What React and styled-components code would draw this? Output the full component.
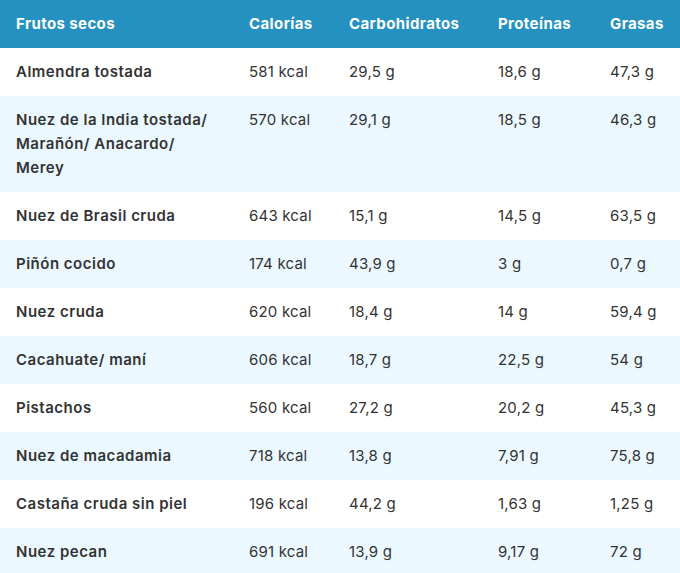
import React from "react";
import styled, { createGlobalStyle } from "styled-components";

const Global = createGlobalStyle`
  html, body { margin: 0; padding: 0; background: #fff; }
  body { font-family: Inter, "Open Sans", sans-serif; color: #333; }
`;

const Table = styled.table`
  width: 680px;
  border-collapse: collapse;
  table-layout: fixed;
  font-size: 15px;
  line-height: 24px;
`;

const HeadCell = styled.th`
  background: #2591c0;
  color: #fff;
  font-weight: 700;
  letter-spacing: 0.4px;
  text-align: left;
  padding: 12px 16px;
  vertical-align: top;
  white-space: nowrap;
`;

const Row = styled.tr`
  background: ${(p) => (p.$striped ? "#ebf8ff" : "#fff")};
`;

const Cell = styled.td`
  padding: 12px 16px;
  vertical-align: top;
  font-weight: ${(p) => (p.$name ? 600 : 400)};
  letter-spacing: ${(p) => (p.$name ? "0.5px" : "0.2px")};
  color: #333;
  white-space: ${(p) => (p.$name ? "normal" : "nowrap")};
`;

const cols = [233, 100, 149, 112, 86];
const headers = ["Frutos secos", "Calorías", "Carbohidratos", "Proteínas", "Grasas"];
const rows = [
  ["Almendra tostada", "581 kcal", "29,5 g", "18,6 g", "47,3 g"],
  ["Nuez de la India tostada/ Marañón/ Anacardo/ Merey", "570 kcal", "29,1 g", "18,5 g", "46,3 g"],
  ["Nuez de Brasil cruda", "643 kcal", "15,1 g", "14,5 g", "63,5 g"],
  ["Piñón cocido", "174 kcal", "43,9 g", "3 g", "0,7 g"],
  ["Nuez cruda", "620 kcal", "18,4 g", "14 g", "59,4 g"],
  ["Cacahuate/ maní", "606 kcal", "18,7 g", "22,5 g", "54 g"],
  ["Pistachos", "560 kcal", "27,2 g", "20,2 g", "45,3 g"],
  ["Nuez de macadamia", "718 kcal", "13,8 g", "7,91 g", "75,8 g"],
  ["Castaña cruda sin piel", "196 kcal", "44,2 g", "1,63 g", "1,25 g"],
  ["Nuez pecan", "691 kcal", "13,9 g", "9,17 g", "72 g"],
];

export default function App() {
  return (
    <>
      <Global />
      <Table>
        <colgroup>
          {cols.map((w, i) => (
            <col key={i} style={{ width: w }} />
          ))}
        </colgroup>
        <thead>
          <tr>
            {headers.map((h) => (
              <HeadCell key={h}>{h}</HeadCell>
            ))}
          </tr>
        </thead>
        <tbody>
          {rows.map((r, i) => (
            <Row key={i} $striped={i % 2 === 1}>
              {r.map((c, j) => (
                <Cell key={j} $name={j === 0}>
                  {j === 0 && i === 1 ? (
                    <>
                      Nuez de la India tostada/
                      <br />
                      Marañón/ Anacardo/
                      <br />
                      Merey
                    </>
                  ) : (
                    c
                  )}
                </Cell>
              ))}
            </Row>
          ))}
        </tbody>
      </Table>
    </>
  );
}
